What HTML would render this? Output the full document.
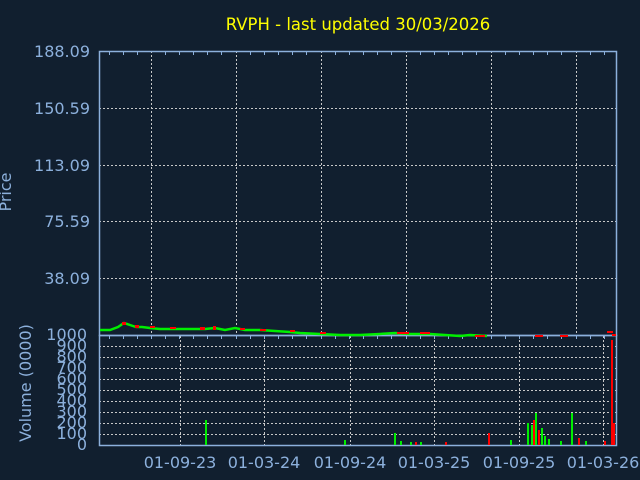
<!DOCTYPE html>
<html><head><meta charset="utf-8"><style>
html,body{margin:0;padding:0;background:#111f2f;width:640px;height:480px;overflow:hidden}
svg{display:block}
text{font-family:"DejaVu Sans","Liberation Sans",sans-serif}
</style></head><body>
<svg width="640" height="480" viewBox="0 0 640 480">
<rect width="640" height="480" fill="#111f2f"/>
<text x="358" y="30" fill="#ffff00" font-size="16.5" text-anchor="middle">RVPH - last updated 30/03/2026</text>
<g stroke="#c8c8c8" stroke-width="1" stroke-dasharray="2,2" fill="none">
<path d="M151.5 51V335M236.5 51V335M321.5 51V335M406.5 51V335M491.5 51V335M576.5 51V335"/>
<path d="M99 108.5H617M99 165.5H617M99 221.5H617M99 278.5H617"/>
<path d="M180.5 336V445M264.5 336V445M350.5 336V445M434.5 336V445M519.5 336V445M603.5 336V445"/>
<path d="M99 346.5H617M99 357.5H617M99 368.5H617M99 379.5H617M99 390.5H617M99 401.5H617M99 412.5H617M99 423.5H617M99 434.5H617"/>
</g>
<g stroke="#8cb0dc" stroke-width="1.5" fill="none">
<rect x="99.5" y="51.5" width="517" height="284"/>
<rect x="99.5" y="335.5" width="517" height="110"/>
</g>
<g stroke="#8cb0dc" stroke-width="1">
<path d="M109.5 51V55M123.5 51V55M137.5 51V55M165.5 51V55M179.5 51V55M193.5 51V55M207.5 51V55M221.5 51V55M250.5 51V55M264.5 51V55M278.5 51V55M292.5 51V55M306.5 51V55M335.5 51V55M349.5 51V55M363.5 51V55M377.5 51V55M391.5 51V55M420.5 51V55M434.5 51V55M448.5 51V55M462.5 51V55M476.5 51V55M505.5 51V55M519.5 51V55M533.5 51V55M547.5 51V55M561.5 51V55M590.5 51V55M604.5 51V55"/>
<path d="M109.5 335V339M123.5 335V339M137.5 335V339M151.5 335V339M165.5 335V339M179.5 335V339M193.5 335V339M207.5 335V339M221.5 335V339M236.5 335V339M250.5 335V339M264.5 335V339M278.5 335V339M292.5 335V339M306.5 335V339M321.5 335V339M335.5 335V339M349.5 335V339M363.5 335V339M377.5 335V339M391.5 335V339M406.5 335V339M420.5 335V339M434.5 335V339M448.5 335V339M462.5 335V339M476.5 335V339M491.5 335V339M505.5 335V339M519.5 335V339M533.5 335V339M547.5 335V339M561.5 335V339M576.5 335V339M590.5 335V339M604.5 335V339"/>
</g>
<polyline fill="none" stroke="#00ee00" stroke-width="2.5" points="100,330 110,330 118,327 124,323 130,325 136,327 142,327 150,328 160,329 175,329 190,329 205,329 215,328 225,330 235,328 245,330 260,330 275,331 290,332 300,333 320,334 340,335 360,335 380,334 395,333 410,334 430,334 445,335 460,336 470,335 487,336"/>
<g fill="#ff0000">
<rect x="122" y="322" width="4" height="3"/><rect x="135" y="325" width="4" height="3"/><rect x="150" y="326" width="5" height="2"/><rect x="170" y="327" width="6" height="2"/><rect x="200" y="327" width="5" height="3"/><rect x="213" y="326" width="3" height="4"/><rect x="240" y="328" width="5" height="2"/><rect x="260" y="329" width="6" height="2"/><rect x="290" y="330" width="5" height="2"/><rect x="320" y="332" width="6" height="2"/><rect x="397" y="332" width="12" height="2"/><rect x="420" y="332" width="10" height="2"/><rect x="475" y="335" width="10" height="2"/><rect x="535" y="335" width="8" height="2"/><rect x="560" y="335" width="8" height="2"/><rect x="607" y="331" width="6" height="2"/><rect x="612" y="334" width="4" height="2"/>
</g>
<g fill="#00ee00">
<rect x="205" y="420" width="2" height="25"/><rect x="394" y="433" width="2" height="12"/><rect x="527" y="423" width="2" height="22"/><rect x="535" y="413" width="2" height="32"/><rect x="531" y="425" width="2" height="20"/><rect x="541" y="428" width="2" height="17"/><rect x="571" y="413" width="2" height="32"/><rect x="344" y="440" width="2" height="5"/><rect x="510" y="440" width="2" height="5"/><rect x="544" y="436" width="2" height="9"/><rect x="548" y="439" width="2" height="6"/><rect x="400" y="441" width="2" height="4"/><rect x="410" y="442" width="2" height="3"/><rect x="420" y="442" width="2" height="3"/><rect x="585" y="441" width="2" height="4"/><rect x="560" y="441" width="2" height="4"/>
</g>
<g fill="#ff0000">
<rect x="488" y="433" width="2" height="12"/><rect x="533" y="420" width="2" height="25"/><rect x="538" y="430" width="2" height="15"/><rect x="611" y="340" width="2" height="105"/><rect x="613" y="423" width="2" height="22"/><rect x="578" y="438" width="2" height="7"/><rect x="604" y="441" width="2" height="4"/><rect x="415" y="442" width="2" height="3"/><rect x="445" y="442" width="2" height="3"/>
</g>
<g fill="#8cb0dc" font-size="16" text-anchor="end">
<text x="90" y="57">188.09</text><text x="90" y="114">150.59</text><text x="90" y="171">113.09</text><text x="90" y="227">75.59</text><text x="90" y="284">38.09</text>
<text x="87" y="340">1000</text><text x="87" y="351">900</text><text x="87" y="362">800</text><text x="87" y="373">700</text><text x="87" y="384">600</text><text x="87" y="395">500</text><text x="87" y="406">400</text><text x="87" y="417">300</text><text x="87" y="428">200</text><text x="87" y="439">100</text><text x="87" y="450">0</text>
</g>
<g fill="#8cb0dc" font-size="16" text-anchor="middle">
<text x="180" y="468">01-09-23</text><text x="264" y="468">01-03-24</text><text x="350" y="468">01-09-24</text><text x="434" y="468">01-03-25</text><text x="519" y="468">01-09-25</text><text x="603" y="468">01-03-26</text>
</g>
<text transform="translate(11,192) rotate(-90)" fill="#8cb0dc" font-size="16" text-anchor="middle">Price</text>
<text transform="translate(31,383) rotate(-90)" fill="#8cb0dc" font-size="16" text-anchor="middle">Volume (0000)</text>
</svg>
</body></html>
